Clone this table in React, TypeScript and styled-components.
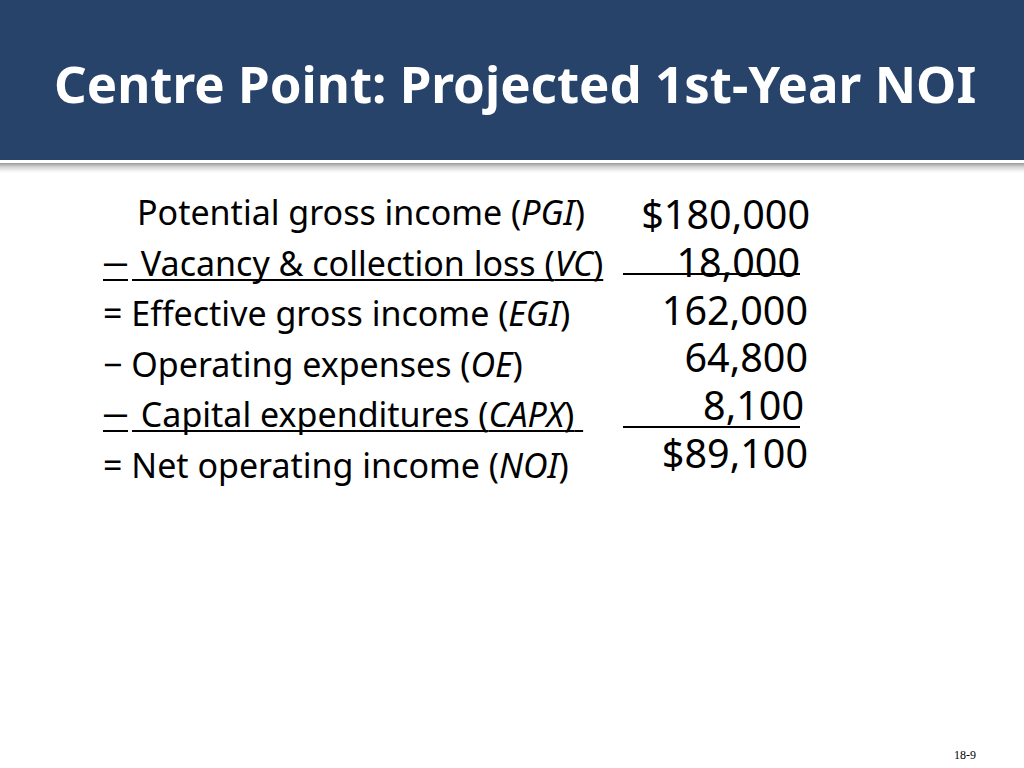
import React from "react";
import styled, { createGlobalStyle } from "styled-components";

const Global = createGlobalStyle`
  html, body { margin: 0; padding: 0; background: #ffffff; }
  body { font-family: "Noto Sans", "Open Sans", sans-serif; color: #000; }
`;

const Slide = styled.div`
  width: 1024px;
  height: 768px;
  position: relative;
  overflow: hidden;
  background: #fff;
  display: flex;
  flex-direction: column;
`;

const Header = styled.header`
  height: 160px;
  background: #27436a;
  display: flex;
  align-items: center;
  padding-left: 54px;
  box-sizing: border-box;
`;

const Title = styled.h1`
  margin: 0;
  margin-top: 6px;
  font-family: "Noto Sans", "Open Sans", sans-serif;
  font-weight: 700;
  font-size: 51px;
  color: #ffffff;
  letter-spacing: 0;
  white-space: nowrap;
`;

const Divider = styled.div`
  height: 3px;
  background: #ffffff;
`;

const Shadow = styled.div`
  height: 10px;
  background: linear-gradient(#9a9a9a, #d4d4d4 40%, #f4f4f4 80%, #ffffff);
`;

const Body = styled.main`
  display: flex;
  padding: 14px 0 0 103px;
`;

const Labels = styled.div`
  width: 520px;
  display: flex;
  flex-direction: column;
`;

const Label = styled.div<{ $indent?: boolean }>`
  font-size: 34px;
  line-height: 50.6px;
  height: 50.6px;
  white-space: nowrap;
  padding-left: ${(p) => (p.$indent ? "34px" : "0")};
`;

const Ruled = styled.span`
  text-decoration: underline;
  text-decoration-thickness: 2px;
  text-underline-offset: 3px;
  text-decoration-skip-ink: none;
  white-space: pre;
`;

const LongDash = styled.span`
  font-size: 25px;
  line-height: 0;
  font-weight: 600;
  position: relative;
  top: -4px;
  padding-right: 4px;
`;

const Var = styled.i`
  font-style: italic;
`;

const Amounts = styled.div`
  width: 187px;
  display: flex;
  flex-direction: column;
  margin-top: 4px;
`;

const Amount = styled.div<{ $ruleAt?: number; $shift?: number }>`
  position: relative;
  font-size: 39.5px;
  line-height: 47.8px;
  height: 47.8px;
  padding-right: ${(p) => p.$shift ?? 0}px;
  text-align: right;
  white-space: nowrap;
  &::after {
    content: "";
    display: ${(p) => (p.$ruleAt !== undefined ? "block" : "none")};
    position: absolute;
    left: 0;
    width: 177px;
    bottom: ${(p) => p.$ruleAt ?? 0}px;
    height: 2px;
    background: #000;
  }
`;

const PageNo = styled.div`
  position: absolute;
  right: 48px;
  bottom: 5px;
  font-family: "Liberation Serif", serif;
  font-size: 12px;
  color: #000;
`;

export default function App() {
  return (
    <>
      <Global />
      <Slide>
        <Header>
          <Title>Centre Point: Projected 1st-Year NOI</Title>
        </Header>
        <Divider />
        <Shadow />
        <Body>
          <Labels>
            <Label $indent>
              Potential gross income (<Var>PGI</Var>)
            </Label>
            <Label>
              <Ruled>
                <LongDash>—</LongDash> Vacancy &amp; collection loss (<Var>VC</Var>)
              </Ruled>
            </Label>
            <Label>
              = Effective gross income (<Var>EGI</Var>)
            </Label>
            <Label>
              − Operating expenses (<Var>OE</Var>)
            </Label>
            <Label>
              <Ruled>
                <LongDash>—</LongDash> Capital expenditures (<Var>CAPX</Var>){" "}
              </Ruled>
            </Label>
            <Label>
              = Net operating income (<Var>NOI</Var>)
            </Label>
          </Labels>
          <Amounts>
            <Amount>$180,000</Amount>
            <Amount $ruleAt={12} $shift={10}>18,000</Amount>
            <Amount $shift={2}>162,000</Amount>
            <Amount $shift={2}>64,800</Amount>
            <Amount $ruleAt={2} $shift={6}>8,100</Amount>
            <Amount $shift={2}>$89,100</Amount>
          </Amounts>
        </Body>
        <PageNo>18-9</PageNo>
      </Slide>
    </>
  );
}
